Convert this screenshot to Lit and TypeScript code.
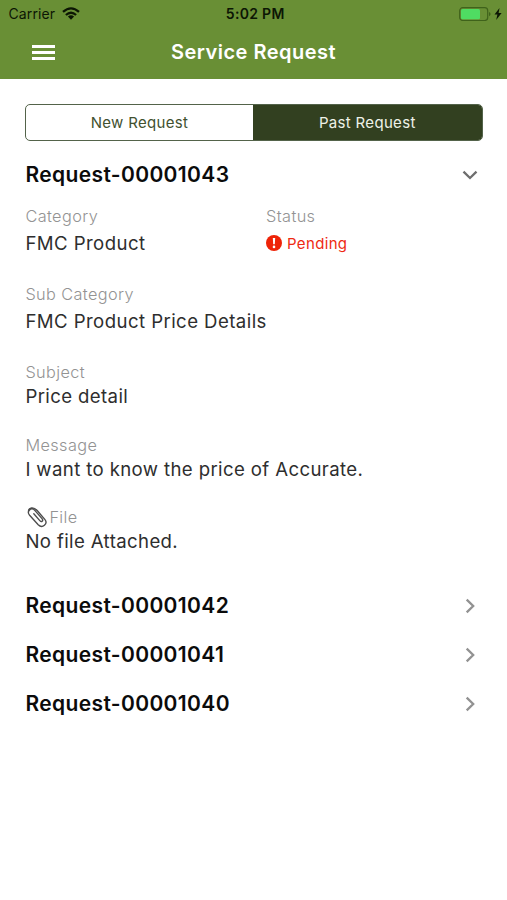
import { LitElement, html, css, svg, nothing } from "lit";
import { customElement, property } from "lit/decorators.js";

@customElement("status-bar")
class StatusBar extends LitElement {
  static styles = css`
    :host { display: grid; grid-template-columns: 1fr auto 1fr; align-items: center; height: 28px; padding: 0 5px 0 8.5px; color: #0c1604; }
    .side { display: flex; align-items: center; }
    .carrier { font-size: 14px; letter-spacing: 0.12px; line-height: 28px; }
    .wifi { margin: -2px 0 0 6.4px; }
    .time { font-size: 14px; font-weight: 600; letter-spacing: 0.3px; line-height: 28px; }
    .right { justify-content: flex-end; gap: 3.5px; }
    svg { display: block; }
  `;
  render() {
    return html`
      <div class="side">
        <span class="carrier">Carrier</span>
        <svg class="wifi" width="18" height="13" viewBox="0 0 18 13">
          <g fill="none" stroke="#0c1604" stroke-width="2.3">
            <path d="M1 4.9Q9 -2.1 17 4.9" />
            <path d="M3.9 8Q9 3.5 14.1 8" />
          </g>
          <path d="M5.9 9.6Q9 6.9 12.1 9.6L9 12.8Z" fill="#0c1604" />
        </svg>
      </div>
      <span class="time">5:02 PM</span>
      <div class="side right">
        <svg width="32" height="14" viewBox="0 0 32 14">
          <rect x="0.7" y="0.7" width="28" height="12.8" rx="3" fill="none" stroke="#3f621b" stroke-width="1.2" />
          <rect x="2" y="2" width="19" height="10.2" rx="1.5" fill="#4fdc62" />
          <path d="M30 5Q31.6 5.4 31.6 7T30 9.2Z" fill="#3f621b" />
        </svg>
        <svg width="8" height="12" viewBox="0 0 8 12"><path d="M5.5 0L0.5 6.6H3.4L2.2 12L7.6 4.9H4.6Z" fill="#0c1604" /></svg>
      </div>
    `;
  }
}

@customElement("request-head")
class RequestHead extends LitElement {
  @property() label = "";
  @property({ type: Boolean }) open = false;
  static styles = css`
    :host { display: flex; align-items: center; justify-content: space-between; height: 49px; padding-right: 4.2px; }
    h2 { margin: 0; color: #0b0b0b; font-size: 21px; font-weight: 600; letter-spacing: 0.37px; line-height: 49px; }
    svg { display: block; }
    path { fill: none; stroke: #929292; stroke-width: 2.3; }
    .down { stroke: #6e6e6e; }
  `;
  render() {
    return html`
      <h2>${this.label}</h2>
      <svg width="16" height="16" viewBox="0 0 16 16">
        ${this.open
          ? svg`<path class="down" d="M1.5 4.6L8 11L14.5 4.6" />`
          : svg`<path d="M4.7 1.6L11.2 8L4.7 14.4" />`}
      </svg>
    `;
  }
}

@customElement("request-field")
class RequestField extends LitElement {
  @property() label = "";
  @property() value = "";
  @property() kind = "";
  static styles = css`
    :host { display: block; }
    .label { display: flex; align-items: center; height: 24px; color: #939393; font-size: 16.3px; letter-spacing: 0.4px; font-weight: 350; }
    .value { display: flex; align-items: center; height: 24px; color: #2e2e2e; font-size: 18.6px; letter-spacing: 0.38px; white-space: nowrap; }
    .spaced .value { height: 30px; letter-spacing: 0.43px; }
    .spaced .pending { gap: 5px; color: #ee2a12; font-size: 15px; letter-spacing: 0.35px; }
    svg { display: block; flex: none; }
    .clip { margin: 0 1.5px 0 1.5px; }
  `;
  render() {
    const pending = this.kind === "pending";
    return html`
      <div class=${this.kind === "file" ? "" : this.kind ? "spaced" : ""}>
        <div class="label">
          ${this.kind === "file"
            ? html`<svg class="clip" width="21" height="22" viewBox="0 0 21 22">
                <path d="M6.8 7.8L12.8 14.6C14.6 16.6 16.8 14.8 15 12.6L8 4.6C4.2 0.6 -0.8 5.2 2.6 9.2L11.2 18.8C15.4 23 21.4 17.8 17.8 13.4L10.4 4.8C6.6 0.2 1.4 1.4 1.4 5.4" fill="none" stroke="#4c4c4c" stroke-width="1.35" stroke-linecap="round" />
              </svg>`
            : nothing}
          <span>${this.label}</span>
        </div>
        <div class="value ${pending ? "pending" : ""}">
          ${pending
            ? html`<svg width="16" height="16" viewBox="0 0 16 16">
                <circle cx="8" cy="8" r="8" fill="#ee2307" />
                <path d="M6.8 3H9.2L8.8 9.2H7.2Z" fill="#fff" />
                <circle cx="8" cy="11.9" r="1.3" fill="#fff" />
              </svg>`
            : nothing}
          <span>${this.value}</span>
        </div>
      </div>
    `;
  }
}

@customElement("app-root")
class AppRoot extends LitElement {
  static styles = css`
    :host { display: block; height: 900px; background: #fff; font-family: Inter, "Liberation Sans", sans-serif; }
    header { height: 79px; background: #698f35; }
    .nav { display: grid; grid-template-columns: 1fr auto 1fr; align-items: center; height: 49px; padding: 0 32px; }
    .menu { display: flex; flex-direction: column; gap: 3.5px; width: 23px; }
    .menu i { height: 2.8px; background: #fff; }
    h1 { margin: 0; color: #fff; font-size: 20px; font-weight: 600; letter-spacing: 0.47px; line-height: 49px; }
    main { padding: 24.6px 24.4px 0 25.4px; }
    .tabs { display: grid; grid-template-columns: 227px 1fr; height: 37.4px; margin: 0 0 0 -0.4px; box-sizing: border-box; border: 1px solid #53634a; border-radius: 5px; overflow: hidden; }
    .tab { display: flex; align-items: center; justify-content: center; color: #42512f; font-size: 15px; letter-spacing: 0.32px; }
    .active { background: #324020; color: #eef2e8; }
    .first { margin-top: 9.2px; }
    .pair { display: grid; grid-template-columns: 240.6px 1fr; margin-top: 5.2px; }
    .sub { margin-top: 24px; }
    .subject { margin-top: 24px; }
    .message { margin-top: 25px; }
    .file { margin-top: 24px; margin-bottom: 28px; }
  `;
  render() {
    return html`
      <header>
        <status-bar></status-bar>
        <div class="nav">
          <div class="menu"><i></i><i></i><i></i></div>
          <h1>Service Request</h1>
        </div>
      </header>
      <main>
        <div class="tabs">
          <div class="tab">New Request</div>
          <div class="tab active">Past Request</div>
        </div>
        <request-head class="first" label="Request-00001043" open></request-head>
        <div class="pair">
          <request-field label="Category" value="FMC Product" kind="wide"></request-field>
          <request-field label="Status" value="Pending" kind="pending"></request-field>
        </div>
        <request-field class="sub" label="Sub Category" value="FMC Product Price Details" kind="wide"></request-field>
        <request-field class="subject" label="Subject" value="Price detail"></request-field>
        <request-field class="message" label="Message" value="I want to know the price of Accurate."></request-field>
        <request-field class="file" label="File" value="No file Attached." kind="file"></request-field>
        ${["Request-00001042", "Request-00001041", "Request-00001040"].map(
          (id) => html`<request-head label=${id}></request-head>`
        )}
      </main>
    `;
  }
}
